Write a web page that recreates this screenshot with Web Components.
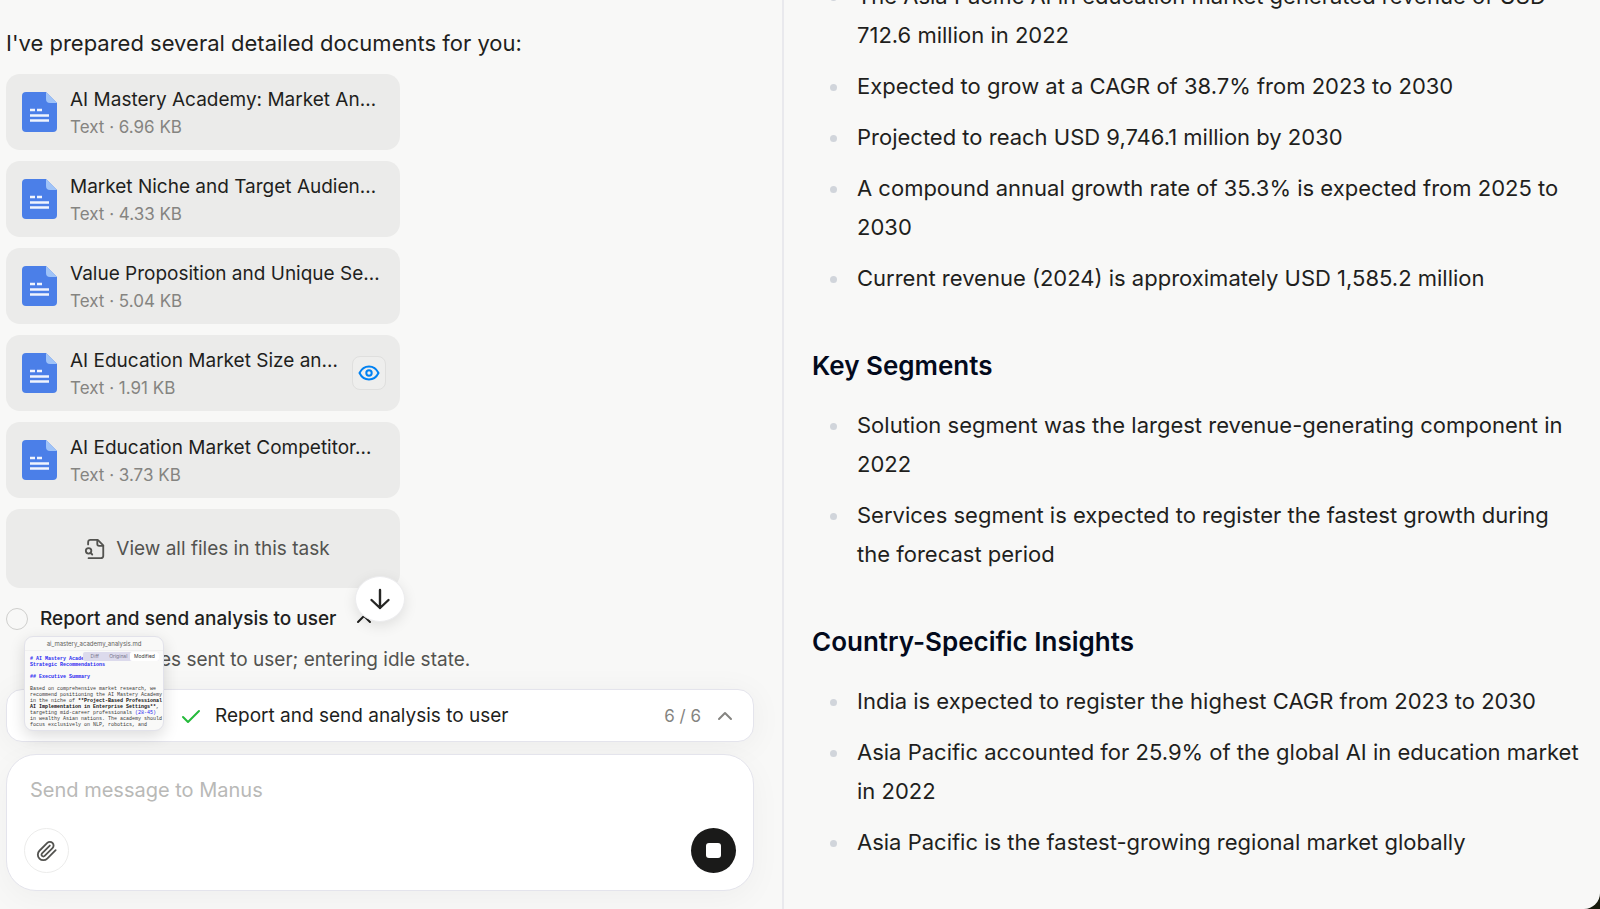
<!DOCTYPE html>
<html lang="en">
<head>
<meta charset="utf-8">
<meta name="viewport" content="width=device-width, initial-scale=1">
<title>Manus</title>
<style>
html, body{
    height: 100%;
    margin: 0;
}
body{
    background: #17190c;
    color: #1f1f1d;
    font-family: Inter, "Liberation Sans", sans-serif;
    font-size: 22px;
}
</style>
</head>
<body>
<manus-app>
    <chat-panel slot="chat">
        <span slot="intro">I've prepared several detailed documents for you:</span>
        <file-card slot="files" data-name="AI Mastery Academy: Market An…" data-size="6.96 KB"></file-card>
        <file-card slot="files" data-name="Market Niche and Target Audien…" data-size="4.33 KB"></file-card>
        <file-card slot="files" data-name="Value Proposition and Unique Se…" data-size="5.04 KB"></file-card>
        <file-card slot="files" data-name="AI Education Market Size an…" data-size="1.91 KB" data-active></file-card>
        <file-card slot="files" data-name="AI Education Market Competitor…" data-size="3.73 KB"></file-card>
        <task-step slot="step" data-title="Report and send analysis to user">es sent to user; entering idle state.</task-step>
        <task-bar slot="dock" data-title="Report and send analysis to user" data-progress="6 / 6"></task-bar>
        <message-box slot="dock" data-placeholder="Send message to Manus"></message-box>
    </chat-panel>
    <doc-viewer slot="viewer">
        <ul>
            <li>The Asia Pacific AI in education market generated revenue of USD 712.6 million in 2022</li>
            <li>Expected to grow at a CAGR of 38.7% from 2023 to 2030</li>
            <li>Projected to reach USD 9,746.1 million by 2030</li>
            <li>A compound annual growth rate of 35.3% is expected from 2025 to 2030</li>
            <li>Current revenue (2024) is approximately USD 1,585.2 million</li>
        </ul>
        <h3>Key Segments</h3>
        <ul>
            <li>Solution segment was the largest revenue-generating component in 2022</li>
            <li>Services segment is expected to register the fastest growth during the forecast period</li>
        </ul>
        <h3>Country-Specific Insights</h3>
        <ul>
            <li>India is expected to register the highest CAGR from 2023 to 2030</li>
            <li>Asia Pacific accounted for 25.9% of the global AI in education market in 2022</li>
            <li>Asia Pacific is the fastest-growing regional market globally</li>
        </ul>
    </doc-viewer>
</manus-app>

<script>
const makeTemplate = (html) => {
    const template = document.createElement("template");
    template.innerHTML = html;
    return template;
};

const appTemplate = makeTemplate(`
<style>
:host{
    display: grid;
    grid-template-columns: 49fr 51fr;
    height: 100vh;
    overflow: hidden;
    background: #f8f8f7;
    border-bottom-right-radius: 16px;
}
::slotted(*){
    min-width: 0;
    min-height: 0;
}
</style>
<slot name="chat"></slot>
<slot name="viewer"></slot>
`);

class ManusApp extends HTMLElement{
    constructor(){
        super();
        this.attachShadow({mode:"open"});
        this.shadowRoot.appendChild(appTemplate.content.cloneNode(true));
    }
}
customElements.define('manus-app', ManusApp);


const chatTemplate = makeTemplate(`
<style>
:host{
    display: flex;
    flex-direction: column;
    box-sizing: border-box;
    padding: 24px 28px 18px 6px;
    border-right: 2px solid #e9e9ed;
}
main{
    flex: 1;
    min-height: 0;
    display: flex;
    flex-direction: column;
}
p{
    margin: 0 0 12px;
    line-height: 38px;
}
.files{
    display: flex;
    flex-direction: column;
    gap: 11px;
    width: 394px;
    max-width: 100%;
    margin-bottom: 16px;
}
.all{
    display: flex;
    align-items: center;
    justify-content: center;
    gap: 10px;
    height: 79px;
    padding: 0 6px 0 14px;
    border: 0;
    border-radius: 14px;
    background: #ebebea;
    color: #535350;
    font: inherit;
    font-size: 19px;
}
.dock{
    position: relative;
    display: flex;
    flex-direction: column;
    gap: 12px;
}
.down{
    position: absolute;
    left: 349px;
    bottom: 269px;
    display: grid;
    place-items: center;
    width: 50px;
    height: 46px;
    padding: 0;
    border: 1px solid #ececee;
    border-radius: 50%;
    background: #fff;
    color: #262624;
    box-shadow: 0 4px 14px rgba(0,0,0,.1);
}
file-preview{
    position: absolute;
    left: 18px;
    top: -53px;
}
</style>
<main>
    <p><slot name="intro"></slot></p>
    <div class="files">
        <slot name="files"></slot>
        <button class="all">
            <svg width="22" height="22" viewBox="0 0 24 24" fill="none" stroke="currentColor" stroke-width="2" stroke-linecap="round" stroke-linejoin="round">
                <path d="M5 22h13.500a2.500 2.500 0 0 0 2.500-2.500V8l-6-6H7A2.500 2.500 0 0 0 4.500 4.500V7"/>
                <path d="M14.500 2.500v4a2 2 0 0 0 2 2H21"/>
                <circle cx="5" cy="14" r="3"/>
                <path d="m9 18-1.800-1.800"/>
            </svg>
            <span>View all files in this task</span>
        </button>
    </div>
    <slot name="step"></slot>
</main>
<div class="dock">
    <slot name="dock"></slot>
    <button class="down" aria-label="Scroll to bottom">
        <svg width="24" height="24" viewBox="0 0 24 24" fill="none" stroke="currentColor" stroke-width="2.400" stroke-linecap="round" stroke-linejoin="round">
            <path d="M12 3v18M3.500 13l8.500 8 8.500-8"/>
        </svg>
    </button>
    <file-preview></file-preview>
</div>
`);

class ChatPanel extends HTMLElement{
    constructor(){
        super();
        this.attachShadow({mode:"open"});
        this.shadowRoot.appendChild(chatTemplate.content.cloneNode(true));
    }
}
customElements.define('chat-panel', ChatPanel);


const fileTemplate = makeTemplate(`
<style>
:host{
    display: flex;
    align-items: center;
    gap: 13px;
    box-sizing: border-box;
    height: 76px;
    padding: 0 14px 0 16px;
    border-radius: 14px;
    background: #ebebea;
}
.icon{
    flex: none;
}
.text{
    flex: 1;
    min-width: 0;
    padding-top: 2px;
}
.name{
    font-size: 19px;
    line-height: 29px;
    white-space: nowrap;
}
.info{
    color: #858481;
    font-size: 17px;
    line-height: 27px;
}
button{
    display: none;
    place-items: center;
    flex: none;
    width: 34px;
    height: 34px;
    padding: 0;
    border: 1px solid #dfdfde;
    border-radius: 8px;
    background: #eeeeed;
    color: #0081f2;
}
:host([data-active]) button{
    display: grid;
}
</style>
<svg class="icon" width="35" height="40" viewBox="0 0 35 40">
    <path d="M4 0h20l11 11v25a4 4 0 0 1-4 4H4a4 4 0 0 1-4-4V4a4 4 0 0 1 4-4z" fill="#4b7fe8"/>
    <path d="M24 0l11 11h-7a4 4 0 0 1-4-4z" fill="#9fc3f8"/>
    <path d="M8 18h5M15 18h5M8 23.500h19M8 28.500h19" stroke="#f0f4fd" stroke-width="2.500"/>
</svg>
<div class="text">
    <div class="name"></div>
    <div class="info"></div>
</div>
<button aria-label="View file">
    <svg width="24" height="24" viewBox="0 0 24 24" fill="none" stroke="currentColor" stroke-width="2" stroke-linejoin="round">
        <path d="M2.500 12c2-4 5.500-6.500 9.500-6.500s7.500 2.500 9.500 6.500c-2 4-5.500 6.500-9.500 6.500S4.500 16 2.500 12z"/>
        <circle cx="12" cy="12" r="2.700"/>
    </svg>
</button>
`);

class FileCard extends HTMLElement{
    constructor(){
        super();
        this.attachShadow({mode:"open"});
        this.shadowRoot.appendChild(fileTemplate.content.cloneNode(true));
    }

    static get observedAttributes(){
        return ["data-name", "data-size"];
    }

    attributeChangedCallback(){
        this.render();
    }

    connectedCallback(){
        this.render();
    }

    render(){
        this.shadowRoot.querySelector(".name").textContent = this.dataset.name;
        this.shadowRoot.querySelector(".info").textContent = `Text · ${this.dataset.size}`;
    }
}
customElements.define('file-card', FileCard);


const stepTemplate = makeTemplate(`
<style>
:host{
    display: block;
    font-size: 19px;
    line-height: 30px;
}
.head{
    display: flex;
    align-items: center;
    gap: 12px;
    margin-bottom: 11px;
    font-weight: 500;
}
.dot{
    box-sizing: border-box;
    width: 22px;
    height: 22px;
    border: 1px solid #cfcfcd;
    border-radius: 50%;
}
.title{
    padding-right: 6px;
}
.body{
    padding-left: 154px;
    color: #535350;
}
</style>
<div class="head">
    <span class="dot"></span>
    <span class="title"></span>
    <svg width="20" height="20" viewBox="0 0 20 20" fill="none" stroke="currentColor" stroke-width="2" stroke-linecap="round" stroke-linejoin="round">
        <path d="M4 13l6-6 6 6"/>
    </svg>
</div>
<div class="body"><slot></slot></div>
`);

class TaskStep extends HTMLElement{
    constructor(){
        super();
        this.attachShadow({mode:"open"});
        this.shadowRoot.appendChild(stepTemplate.content.cloneNode(true));
    }

    connectedCallback(){
        this.shadowRoot.querySelector(".title").textContent = this.dataset.title;
    }
}
customElements.define('task-step', TaskStep);


const previewTemplate = makeTemplate(`
<style>
:host{
    display: block;
    box-sizing: border-box;
    width: 140px;
    height: 95px;
    overflow: hidden;
    border: 1px solid #e2e2ea;
    border-radius: 9px;
    background: #f9f9f8;
    box-shadow: 0 5px 16px rgba(0,0,0,.14);
    font-size: 5px;
}
header{
    padding: 0 6px;
    border-bottom: 1px solid #f0f0f0;
    color: #5e5e5b;
    font-size: 6px;
    line-height: 13px;
    text-align: center;
}
.code{
    padding: 5px 5px 0;
    color: #3c3c3a;
    font-family: "Liberation Mono", monospace;
    line-height: 6px;
    white-space: pre;
}
.code div{
    min-height: 6px;
}
.code b{
    color: #111;
}
i{
    color: #2a2af0;
    font-style: normal;
}
.h{
    color: #2a2af0;
    font-weight: bold;
}
.tabs{
    position: absolute;
    right: 4px;
    top: 15px;
    display: flex;
    width: 76px;
    height: 9px;
    border-radius: 2px;
    background: #dcdaec;
}
.tabs button{
    flex: 1;
    padding: 0;
    border: 0;
    border-radius: 2px;
    background: none;
    color: #77768a;
    font: inherit;
    line-height: 9px;
}
.tabs .on{
    flex: none;
    width: 29px;
    background: #fff;
    color: #333;
}
</style>
<header>ai_mastery_academy_analysis.md</header>
<div class="code">
<div class="h"># AI Mastery Acade</div><div class="h">Strategic Recommendations</div><div></div><div class="h">## Executive Summary</div><div></div><div>Based on comprehensive market research, we</div><div>recommend positioning the AI Mastery Academy</div><div>in the niche of <b>**Project-Based Professional</b></div><div><b>AI Implementation in Enterprise Settings**</b>,</div><div>targeting mid-career professionals <i>(28-45)</i></div><div>in wealthy Asian nations. The academy should</div><div>focus exclusively on NLP, robotics, and</div></div>
<div class="tabs">
    <button>Diff</button>
    <button>Original</button>
    <button class="on">Modified</button>
</div>
`.replace('<div class="code">\n', '<div class="code">'));

class FilePreview extends HTMLElement{
    constructor(){
        super();
        this.attachShadow({mode:"open"});
        this.shadowRoot.appendChild(previewTemplate.content.cloneNode(true));
    }
}
customElements.define('file-preview', FilePreview);


const barTemplate = makeTemplate(`
<style>
:host{
    display: flex;
    align-items: center;
    gap: 14px;
    box-sizing: border-box;
    height: 53px;
    padding: 0 18px 0 174px;
    border: 1px solid #e4e4ec;
    border-radius: 16px;
    background: #fff;
    box-shadow: 0 4px 32px rgba(0,0,0,.05);
    font-size: 19px;
}
.title{
    flex: 1;
}
.count{
    color: #858481;
    font-size: 17px;
}
button{
    display: grid;
    padding: 0;
    border: 0;
    background: none;
    color: #858481;
}
</style>
<svg width="20" height="20" viewBox="0 0 20 20" fill="none" stroke="#25ba3b" stroke-width="2" stroke-linecap="round" stroke-linejoin="round">
    <path d="M2 11l5 5L18 5"/>
</svg>
<span class="title"></span>
<span class="count"></span>
<button aria-label="Expand">
    <svg width="20" height="20" viewBox="0 0 20 20" fill="none" stroke="currentColor" stroke-width="2" stroke-linecap="round" stroke-linejoin="round">
        <path d="M4 13l6-6 6 6"/>
    </svg>
</button>
`);

class TaskBar extends HTMLElement{
    constructor(){
        super();
        this.attachShadow({mode:"open"});
        this.shadowRoot.appendChild(barTemplate.content.cloneNode(true));
    }

    connectedCallback(){
        this.shadowRoot.querySelector(".title").textContent = this.dataset.title;
        this.shadowRoot.querySelector(".count").textContent = this.dataset.progress;
    }
}
customElements.define('task-bar', TaskBar);


const messageTemplate = makeTemplate(`
<style>
:host{
    display: flex;
    flex-direction: column;
    gap: 20px;
    box-sizing: border-box;
    padding: 17px;
    border: 1px solid #e4e4ec;
    border-radius: 30px;
    background: #fff;
    box-shadow: 0 8px 32px rgba(0,0,0,.04);
}
textarea{
    display: block;
    box-sizing: border-box;
    width: 100%;
    height: 36px;
    padding: 0 6px;
    border: 0;
    outline: 0;
    resize: none;
    overflow: hidden;
    background: none;
    color: inherit;
    font: inherit;
    font-size: 20px;
    line-height: 36px;
}
textarea::placeholder{
    color: #b9b9b7;
}
.row{
    display: flex;
    justify-content: space-between;
}
button{
    display: grid;
    place-items: center;
    width: 45px;
    height: 45px;
    padding: 0;
    border: 1px solid #ececeb;
    border-radius: 50%;
    background: none;
    color: #535350;
}
.stop{
    border: 0;
    background: #1a1a19;
    color: #fff;
}
</style>
<textarea rows="1" aria-label="Message"></textarea>
<div class="row">
    <button aria-label="Attach file">
        <svg width="22" height="22" viewBox="0 0 24 24" fill="none" stroke="currentColor" stroke-width="2" stroke-linecap="round" stroke-linejoin="round">
            <path d="m21.440 11.050-9.190 9.190a6 6 0 0 1-8.490-8.490l8.570-8.570A4 4 0 1 1 18 8.840l-8.590 8.570a2 2 0 0 1-2.830-2.830l8.490-8.480"/>
        </svg>
    </button>
    <button class="stop" aria-label="Stop">
        <svg width="15" height="15" viewBox="0 0 15 15"><rect width="15" height="15" rx="3" fill="currentColor"/></svg>
    </button>
</div>
`);

class MessageBox extends HTMLElement{
    constructor(){
        super();
        this.attachShadow({mode:"open"});
        this.shadowRoot.appendChild(messageTemplate.content.cloneNode(true));
    }

    connectedCallback(){
        this.shadowRoot.querySelector("textarea").placeholder = this.dataset.placeholder;
    }
}
customElements.define('message-box', MessageBox);


// the viewer is scrolled to its end, so the content is aligned to the bottom
const viewerTemplate = makeTemplate(`
<style>
:host{
    display: flex;
    flex-direction: column;
    justify-content: flex-end;
    box-sizing: border-box;
    padding: 0 18px 47px 28px;
    overflow: hidden;
}
h3{
    margin: 50px 0 22px;
    color: #030a1c;
    font-size: 26px;
    font-weight: 600;
    line-height: 36px;
}
ul{
    display: flex;
    flex-direction: column;
    gap: 12px;
    margin: 0;
    padding: 0;
    list-style: none;
}
li{
    display: flex;
    gap: 20px;
    padding-left: 18px;
    line-height: 39px;
}
li::before{
    content: "";
    flex: none;
    width: 7px;
    height: 7px;
    margin-top: 17px;
    border-radius: 50%;
    background: #d1d5db;
}
</style>
`);

class DocViewer extends HTMLElement{
    constructor(){
        super();
        this.attachShadow({mode:"open"});
        this.shadowRoot.appendChild(viewerTemplate.content.cloneNode(true));
    }

    connectedCallback(){
        this.shadowRoot.append(...this.children);
    }
}
customElements.define('doc-viewer', DocViewer);
</script>
</body>
</html>
